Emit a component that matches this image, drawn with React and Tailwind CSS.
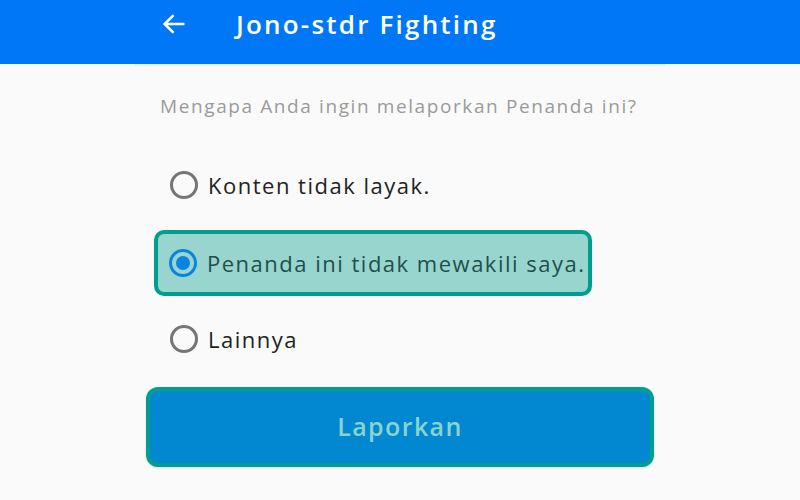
import React, { useState } from "react";

const options = ["Konten tidak layak.", "Penanda ini tidak mewakili saya.", "Lainnya"];

const Radio = ({ checked }) => (
	<span
		className={
			checked
				? "flex h-[28px] w-[28px] shrink-0 items-center justify-center rounded-full border-[3px] border-[#0a84e0]"
				: "flex h-[28px] w-[28px] shrink-0 items-center justify-center rounded-full border-[3px] border-[#757575]"
		}
	>
		{checked && <span className="h-[14px] w-[14px] rounded-full bg-[#0a84e0]" />}
	</span>
);

const App = () => {
	const [selected, setSelected] = useState(1);

	return (
		<div className="h-[500px] w-[800px] overflow-hidden bg-[#fafafa]" style={{ fontFamily: "'Open Sans', Lato, sans-serif" }}>
			<header className="flex h-[64px] items-start bg-[#0077f6] pl-[160px] pt-[6px]">
				<div className="flex h-[36px] items-center">
					<svg width="28" height="28" viewBox="0 0 24 24" fill="none" stroke="white" strokeWidth="2.2" strokeLinecap="round" strokeLinejoin="round">
						<path d="M20 12H4" />
						<path d="M11 5l-7 7 7 7" />
					</svg>
					<h1 className="ml-[48px] text-[26px] font-semibold leading-[36px] tracking-[2.2px] text-white">Jono-stdr Fighting</h1>
				</div>
			</header>

			<div className="mx-auto h-[3px] w-[530px] bg-gradient-to-b from-[#e6e6e6] to-[#fafafa]" />

			<div className="ml-[160px]">
				<p className="mt-[24px] h-[30px] text-[19px] leading-[30px] tracking-[1.6px] text-[#9a9a9a]">Mengapa Anda ingin melaporkan Penanda ini?</p>

				<div className="mt-[41px] flex flex-col items-start">
					{options.map((label, i) => {
						const checked = selected === i;
						return (
							<button
								key={label}
								onClick={() => setSelected(i)}
								className={
									checked
										? "ml-[-6px] mt-[22px] flex h-[66px] w-[438px] items-center gap-[10px] rounded-[10px] border-[4px] border-[#009e8e] bg-[#98d5cf] pl-[11px] text-left"
										: i === 0
											? "flex h-[46px] items-center gap-[10px] pl-[10px] text-left"
											: "mt-[20px] flex h-[46px] items-center gap-[10px] pl-[10px] text-left"
								}
							>
								<Radio checked={checked} />
								<span className={checked ? "whitespace-nowrap text-[22px] tracking-[1.5px] text-[#1f504b]" : "whitespace-nowrap text-[22px] tracking-[1.5px] text-[#222]"}>{label}</span>
							</button>
						);
					})}
				</div>
			</div>

			<div className="mx-auto mt-[25px] w-[508px]">
				<button className="flex h-[80px] w-full items-center justify-center rounded-[12px] border-[4px] border-[#009e8e] bg-[#0288d1] shadow-sm">
					<span className="text-[25px] font-semibold tracking-[1.4px] text-[#8ad3ce]">Laporkan</span>
				</button>
			</div>
		</div>
	);
};

export default App;
